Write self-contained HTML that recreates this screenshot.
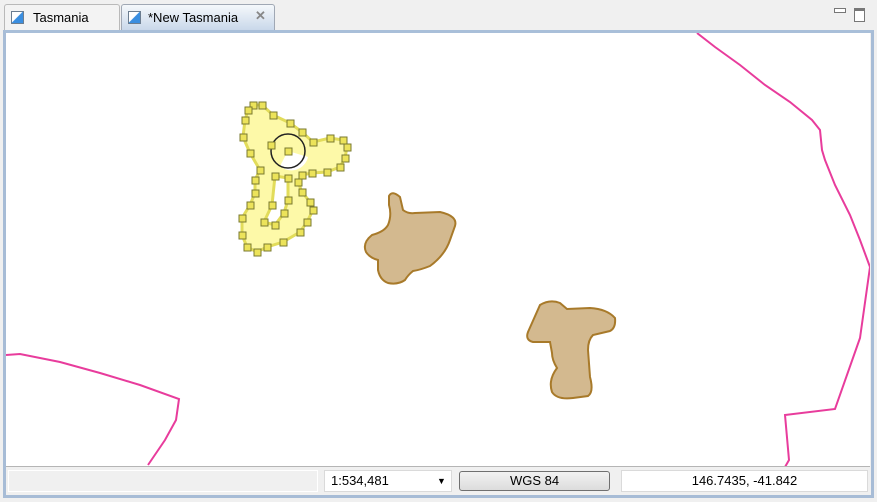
<!DOCTYPE html>
<html><head><style>
body{margin:0;width:877px;height:502px;background:#f0f0f0;font-family:"Liberation Sans",sans-serif;font-size:13px;position:relative;overflow:hidden}
.tab{position:absolute;top:4px;height:26px;border:1px solid #b9b9b9;border-bottom:none;border-radius:3px 3px 0 0;box-sizing:border-box;color:#000}
.ico{position:absolute;top:6px;left:6px;width:13px;height:13px;border:1px solid #6b7d90;background:linear-gradient(135deg,#fff 45%,#3a8ee0 50%);box-sizing:border-box}
.frame{position:absolute;left:3px;top:30px;width:871px;height:468px;border:3px solid #a7bcd6;box-sizing:border-box;border-top:3px solid #a9bfd9}
.fld{position:absolute;top:470px;height:22px;box-sizing:border-box;background:#fff;border:1px solid #dadada;font-size:13px;line-height:20px}
</style></head><body>
<div class="tab" style="left:4px;width:116px;background:#f3f3f3"><div class="ico"></div><span style="position:absolute;left:28px;top:5px;font-size:13px">Tasmania</span></div>
<div class="tab" style="left:121px;width:154px;background:linear-gradient(#f5f8fb,#c9d8ea);border-color:#a0a8b4"><div class="ico"></div><span style="position:absolute;left:26px;top:5px;font-size:13px">*New Tasmania</span><span style="position:absolute;left:133px;top:3px;font-size:13px;color:#888;font-weight:bold">✕</span></div>
<div style="position:absolute;left:834px;top:8px;width:10px;height:3px;border:1px solid #777;background:#fff"></div>
<div style="position:absolute;left:854px;top:8px;width:9px;height:10px;border:1px solid #777;border-top:3px solid #777;background:#fff"></div>
<div class="frame"></div>
<svg style="position:absolute;left:6px;top:33px" width="864" height="434" viewBox="6 33 864 434">
<rect x="6" y="33" width="864" height="434" fill="#fff"/>
<g fill="none" stroke="#e83c9c" stroke-width="2">
<polyline points="697,33 715,47 740,65 765,85 790,102 812,120 820,130 822,150 825,160 835,185 850,215 860,240 870,267"/>
<polyline points="870,267 860,338 835,409 785,415 789,460 785,467"/>
<polyline points="6,355 20,354 60,362 100,373 140,385 179,399 176,420 165,440 148,465"/>
</g>
<g fill="#d3b98f" stroke="#a87a2a" stroke-width="2">
<path d="M389,196 Q392,190 400,197 L403,210 Q408,214 415,213 L440,212 Q458,216 455,226 L450,240 Q445,255 430,266 Q420,270 413,271 Q408,275 405,280 Q398,285 388,283 Q380,280 378,270 L378,260 Q370,258 366,252 Q362,243 372,235 Q384,232 388,225 Q392,215 389,205 Z"/>
<path d="M540,305 Q550,299 560,303 L567,309 L590,308 Q607,309 615,318 Q616,328 610,331 L593,335 Q588,340 588,350 L590,377 Q594,392 588,396 L573,398 Q557,400 552,392 Q548,380 557,368 Q552,360 552,353 L550,342 L533,342 Q525,340 528,332 Z"/>
</g>
<path fill-rule="evenodd" fill="#fdf9a8" stroke="#e2dc5a" stroke-width="3" d="M253,105 L262,105 273,115 290,123 302,132 313,142 330,138 343,140 347,147 345,158 340,167 327,172 312,173 302,175 298,182 302,192 310,202 313,210 307,222 300,232 283,242 267,247 257,252 247,247 242,235 242,218 250,205 255,193 255,180 260,170 250,153 243,137 245,120 248,110 Z M275,176 L272,205 264,222 275,225 284,213 288,200 288,178 Z"/>
<path d="M288,151 L308,157 A17,17 0 0 1 280,166 Z" fill="#fff"/>
<circle cx="288" cy="151" r="17" fill="none" stroke="#222" stroke-width="1.5"/>
<g fill="#ece35a" stroke="#7a7a30" stroke-width="1">
<rect x="250" y="102" width="7" height="7"/><rect x="259" y="102" width="7" height="7"/><rect x="270" y="112" width="7" height="7"/><rect x="287" y="120" width="7" height="7"/><rect x="299" y="129" width="7" height="7"/><rect x="310" y="139" width="7" height="7"/><rect x="327" y="135" width="7" height="7"/><rect x="340" y="137" width="7" height="7"/><rect x="344" y="144" width="7" height="7"/><rect x="342" y="155" width="7" height="7"/><rect x="337" y="164" width="7" height="7"/><rect x="324" y="169" width="7" height="7"/><rect x="309" y="170" width="7" height="7"/><rect x="299" y="172" width="7" height="7"/><rect x="295" y="179" width="7" height="7"/><rect x="299" y="189" width="7" height="7"/><rect x="307" y="199" width="7" height="7"/><rect x="310" y="207" width="7" height="7"/><rect x="304" y="219" width="7" height="7"/><rect x="297" y="229" width="7" height="7"/><rect x="280" y="239" width="7" height="7"/><rect x="264" y="244" width="7" height="7"/><rect x="254" y="249" width="7" height="7"/><rect x="244" y="244" width="7" height="7"/><rect x="239" y="232" width="7" height="7"/><rect x="239" y="215" width="7" height="7"/><rect x="247" y="202" width="7" height="7"/><rect x="252" y="190" width="7" height="7"/><rect x="252" y="177" width="7" height="7"/><rect x="257" y="167" width="7" height="7"/><rect x="247" y="150" width="7" height="7"/><rect x="240" y="134" width="7" height="7"/><rect x="242" y="117" width="7" height="7"/><rect x="245" y="107" width="7" height="7"/>
<rect x="272" y="173" width="7" height="7"/><rect x="269" y="202" width="7" height="7"/><rect x="261" y="219" width="7" height="7"/><rect x="272" y="222" width="7" height="7"/><rect x="281" y="210" width="7" height="7"/><rect x="285" y="197" width="7" height="7"/><rect x="285" y="175" width="7" height="7"/><rect x="285" y="148" width="7" height="7"/><rect x="268" y="142" width="7" height="7"/>
</g>
</svg>
<div style="position:absolute;left:6px;top:466px;width:864px;height:1px;background:#b5b5b5"></div>
<div class="fld" style="left:8px;width:310px;background:#f0f0f0;border-color:#fff"></div>
<div class="fld" style="left:324px;width:128px;padding-left:6px">1:534,481<span style="position:absolute;left:112px;top:0;font-size:9px">▼</span></div>
<div style="position:absolute;left:459px;top:471px;width:151px;height:20px;box-sizing:border-box;border:1px solid #707070;border-radius:3px;background:linear-gradient(#f2f2f2,#dcdcdc);text-align:center;font-size:13px;line-height:18px">WGS 84</div>
<div class="fld" style="left:621px;width:247px;text-align:center">146.7435, -41.842</div>
</body></html>
